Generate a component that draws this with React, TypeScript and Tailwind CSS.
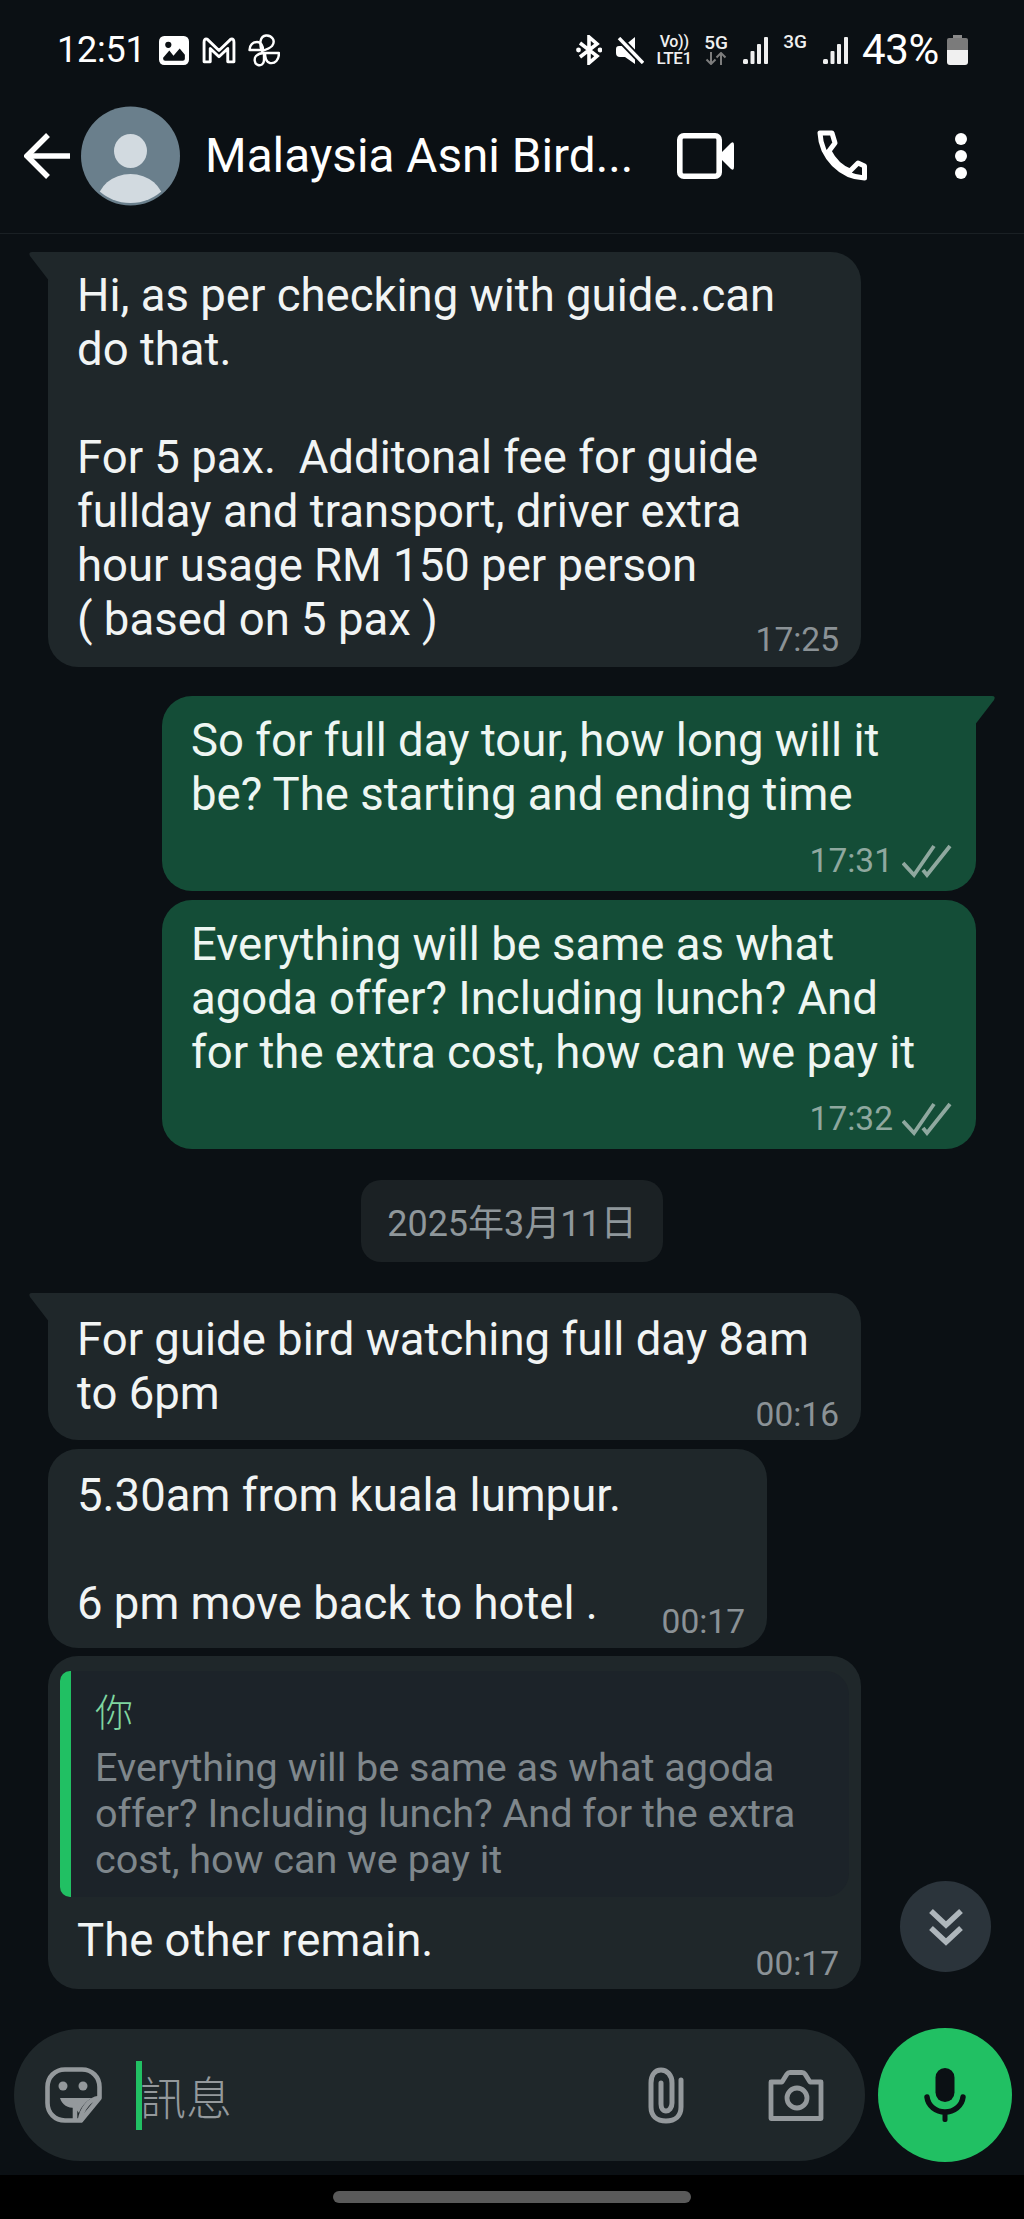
import React from "react";

const Roboto = "font-['Roboto','Noto_Sans_CJK_TC',sans-serif]";

function Ticks() {
  return (
    <svg width="50" height="34" viewBox="0 0 50 34" fill="none" stroke="#8fa89f" strokeWidth="3.8" className="ml-[9px]">
      <path d="M1 19 L12 31 L32 2" />
      <path d="M21 26 L25 31 L48 2" />
    </svg>
  );
}

function Tail({ side, color }: { side: "l" | "r"; color: string }) {
  return side === "l" ? (
    <svg width="22" height="30" viewBox="0 0 22 30" className="absolute -left-[20px] top-0" fill={color}>
      <path d="M22 0 H4 Q0 0 2 4 L22 30 Z" />
    </svg>
  ) : (
    <svg width="22" height="30" viewBox="0 0 22 30" className="absolute -right-[20px] top-0" fill={color}>
      <path d="M0 0 H18 Q22 0 20 4 L0 30 Z" />
    </svg>
  );
}

function Time({ t, ticks }: { t: string; ticks?: boolean }) {
  return (
    <div className={`flex items-center self-end text-[33.5px] leading-[40px] ${ticks ? "text-[#8fa89f]" : "text-[#8b9296]"}`}>
      {t}
      {ticks && <Ticks />}
    </div>
  );
}

function In({ lines, t, w, tail, timeMt, pt = "pt-[17px]", pb = "pb-[7px]", mt }: { lines: string[]; t: string; w: string; tail?: boolean; timeMt: string; pt?: string; pb?: string; mt: string }) {
  return (
    <div className={`relative shrink-0 flex flex-col ${w} ${mt} ${pt} ${pb} pl-[29px] pr-[22px] bg-[#1f272a] rounded-[30px] ${tail ? "rounded-tl-none" : ""}`}>
      {tail && <Tail side="l" color="#1f272a" />}
      {lines.map((l, i) => (
        <div key={i} className="h-[54px] text-[45.5px] leading-[54px] whitespace-nowrap text-[#f1f4f4]">{l}</div>
      ))}
      <div className={`self-end ${timeMt}`}><Time t={t} /></div>
    </div>
  );
}

function Out({ lines, t, tail, mt }: { lines: string[]; t: string; tail?: boolean; mt: string }) {
  return (
    <div className={`relative shrink-0 flex flex-col self-end mr-[48px] w-[814px] ${mt} pt-[18px] pb-[10px] pl-[29px] pr-[24px] bg-[#144d37] rounded-[30px] ${tail ? "rounded-tr-none" : ""}`}>
      {tail && <Tail side="r" color="#144d37" />}
      {lines.map((l, i) => (
        <div key={i} className="h-[54px] text-[45.5px] leading-[54px] whitespace-nowrap text-[#eef6f2]">{l}</div>
      ))}
      <div className="self-end mt-[19px]"><Time t={t} ticks /></div>
    </div>
  );
}

function Signal() {
  return (
    <svg width="25" height="27" viewBox="0 0 25 27" fill="#efefef">
      <rect x="0" y="22" width="5" height="5" rx="1.5" />
      <rect x="7.5" y="14" width="4" height="13" rx="1" />
      <rect x="14" y="7" width="4" height="20" rx="1" />
      <rect x="21" y="0" width="4" height="27" rx="1" />
    </svg>
  );
}

function StatusBar() {
  return (
    <div className="flex h-[100px] shrink-0 items-center pl-[57px] pr-[56px] text-white">
      <span className="text-[36px] leading-[40px] w-[102px] -tracking-[0.2px]">12:51</span>
      <svg width="30" height="29" viewBox="0 0 29 28">
        <rect x="0" y="0" width="29" height="28" rx="5" fill="#fff" />
        <circle cx="9" cy="8.5" r="3" fill="#0b1014" />
        <path d="M4 21 L10 14 L14 19 L20 12 L25 18 V22 Q25 24 23 24 H6 Q4 24 4 22 Z" fill="#0b1014" />
      </svg>
      <svg width="34" height="27" viewBox="0 0 33 26" fill="none" stroke="#fff" strokeWidth="2.8" className="ml-[13px]" strokeLinejoin="round">
        <path d="M2 24 V5 Q2 1 5 2 L16.5 13 L28 2 Q31 1 31 5 V24 H25 V11 L16.5 19 L8 11 V24 Z" />
      </svg>
      <svg width="32" height="33" viewBox="0 0 32 33" fill="none" stroke="#fff" strokeWidth="2.4" className="ml-[12px]" strokeLinejoin="round">
        <path d="M14 17 C11 10 12 2 18 1.5 C24 1 28 7 24 12 C21 15 17 16 14 17 Z" />
        <path d="M17 19 H31 C31 26 27 30 22 29 C18 28 17 23 17 19 Z" />
        <path d="M15 16 H1.5 C1.5 11 5 8 9 8 C13 8 15 12 15 16 Z" />
        <path d="M16 19 V26 C16 30 13 32 10 31 C6 30 6 24 8 22 C10 20 13 19 16 19 Z" />
      </svg>
      <div className="flex-1" />
      <svg width="26" height="30" viewBox="0 0 26 30" fill="none" stroke="#fff" strokeWidth="3.6">
        <path d="M4 8 L21 21 L13 28 V2 L21 9 L4 22" />
        <circle cx="2.5" cy="15" r="2.4" fill="#fff" stroke="none" />
        <circle cx="24" cy="15" r="2.4" fill="#fff" stroke="none" />
      </svg>
      <svg width="29" height="27" viewBox="0 0 29 27" className="ml-[13px]">
        <path d="M1 12 Q1 9 4 9 H9 L20 0 V27 L10 20 H5 Q1 20 1 16 Z" fill="#fff" />
        <path d="M3 0 L29 27" stroke="#0b1014" strokeWidth="7" />
        <path d="M4 1 L28 26" stroke="#fff" strokeWidth="3.4" />
      </svg>
      <div className="ml-[12px] w-[36px] flex flex-col items-center text-[#efefef] font-medium leading-[16px] text-[17px] tracking-[-0.3px]">
        <span className="text-[16px]">Vo))</span>
        <span>LTE1</span>
      </div>
      <div className="ml-[12px] w-[24px] flex flex-col items-center text-[#efefef]">
        <span className="text-[19px] leading-[16px] font-medium">5G</span>
        <svg width="22" height="13" viewBox="0 0 22 13" fill="none" stroke="#7d7d7d" strokeWidth="2" className="mt-[1px]">
          <path d="M6 0 V12 M1.5 7.5 L6 12 L10.5 7.5" />
          <path d="M16 13 V1 M11.5 5.5 L16 1 L20.5 5.5" />
        </svg>
      </div>
      <div className="ml-[15px]"><Signal /></div>
      <span className="ml-[15px] self-start mt-[34px] text-[19px] leading-[16px] font-medium text-[#efefef]">3G</span>
      <div className="ml-[16px]"><Signal /></div>
      <span className="ml-[14px] text-[42px] leading-[40px] -tracking-[0.3px]">43%</span>
      <svg width="21" height="30" viewBox="0 0 21 30" className="ml-[8px]">
        <rect x="6" y="0" width="9" height="3" fill="#8a8a8a" />
        <path d="M2 3 H19 Q21 3 21 5 V15 H0 V5 Q0 3 2 3 Z" fill="#7b7b7b" />
        <path d="M0 15 H21 V27 Q21 30 18 30 H3 Q0 30 0 27 Z" fill="#f0f0f0" />
      </svg>
    </div>
  );
}

function Header() {
  return (
    <div className="flex h-[134px] shrink-0 items-center border-b border-b-[#1a2024] pb-[22px] text-white">
      <svg width="46" height="46" viewBox="0 0 46 46" fill="none" stroke="#fff" strokeWidth="5.5" className="ml-[24px]">
        <path d="M46 23 H4" />
        <path d="M24 2 L3 23 L24 44" />
      </svg>
      <svg width="99" height="100" viewBox="0 0 99 100" className="ml-[11px]">
        <circle cx="49.5" cy="50" r="49.5" fill="#6a7f8c" />
        <clipPath id="av"><circle cx="49.5" cy="50" r="47" /></clipPath>
        <ellipse cx="49.5" cy="45" rx="16.5" ry="17" fill="#d2dae0" />
        <ellipse cx="49.5" cy="96" rx="33" ry="28" fill="#d2dae0" clipPath="url(#av)" />
      </svg>
      <span className="ml-[25px] w-[472px] text-[47.7px] leading-[54px] whitespace-nowrap">Malaysia Asni Bird...</span>
      <svg width="57" height="46" viewBox="0 0 57 46">
        <rect x="2.8" y="2.8" width="39.4" height="40.4" rx="4" fill="none" stroke="#fff" strokeWidth="5.6" />
        <path d="M44 20 L54 10 Q57 8 57 12 V34 Q57 38 54 36 L44 26 Z" fill="#fff" />
      </svg>
      <svg width="50" height="51" viewBox="0 0 50 51" fill="none" stroke="#fff" strokeWidth="5" className="ml-[83px]" strokeLinejoin="round">
        <path d="M3 3 H15 L18 13 L12 21 C17 31 23 37 33 41 L41 33 L47.5 36 V48 C24 47 4 27 3 3 Z" />
      </svg>
      <div className="ml-[88px] flex flex-col gap-[5px]">
        <div className="w-[12px] h-[12px] rounded-full bg-white" />
        <div className="w-[12px] h-[12px] rounded-full bg-white" />
        <div className="w-[12px] h-[12px] rounded-full bg-white" />
      </div>
    </div>
  );
}

function Composer() {
  return (
    <div className="flex items-center -ml-[34px] h-[134px] mt-[39px] shrink-0">
      <div className="flex items-center w-[851px] h-[132px] rounded-[66px] bg-[#1f272a]">
        <svg width="57" height="56" viewBox="0 0 57 56" fill="none" stroke="#94999c" strokeWidth="4.6" strokeLinejoin="round" className="ml-[31px]">
          <path d="M20 2.5 H37 C47 2.5 54.5 10 54.5 20 V31 L36 53.5 H20 C10 53.5 2.5 46 2.5 36 V20 C2.5 10 10 2.5 20 2.5 Z" />
          <path d="M54 31 C44 32 37 42 35 53" />
          <path d="M15 31 H47 C41 34 36 40 34 46 L30 41 C23 41 17 38 15 31 Z" fill="#94999c" stroke="none" />
          <path d="M30 40 V53" />
          <circle cx="18" cy="19" r="4.5" fill="#94999c" stroke="none" />
          <circle cx="38" cy="19" r="4.5" fill="#94999c" stroke="none" />
        </svg>
        <div className="ml-[34px] w-[6px] h-[69px] bg-[#21c063]" />
        <span className="-ml-[2px] text-[46px] leading-[60px] text-[#94999c] font-['Noto_Sans_CJK_TC',sans-serif] font-light">訊息</span>
        <div className="flex-1" />
        <svg width="36" height="57" viewBox="0 0 36 57" fill="none" stroke="#94999c" strokeWidth="5" strokeLinecap="round">
          <path d="M33 13 V40 C33 49 27 54 18 54 C9 54 3 49 3 40 V16 C3 8 7 3 13 3 C19 3 24 8 24 16 V36 C24 41 21 44 18 44 C15 44 13 41 13 37 V16" />
        </svg>
        <svg width="56" height="51" viewBox="0 0 56 51" className="ml-[84px] mr-[41px]" fill="none" stroke="#94999c" strokeWidth="4.8">
          <path d="M3 12 H14 L19 4 Q20 2.5 22 2.5 H34 Q36 2.5 37 4 L42 12 H53 V48.5 H3 Z" strokeLinejoin="round" />
          <circle cx="29" cy="28" r="10" />
        </svg>
      </div>
      <div className="ml-[13px] flex items-center justify-center w-[134px] h-[134px] rounded-full bg-[#21c063]">
        <svg width="42" height="54" viewBox="0 0 42 54" fill="#0b1014">
          <rect x="11.5" y="0" width="19" height="34" rx="9.5" />
          <path d="M3 29 C4 38 12 44 21 44 C30 44 38 38 39 29" fill="none" stroke="#0b1014" strokeWidth="5.5" strokeLinecap="round" />
          <rect x="18.5" y="42" width="5" height="12" rx="2" />
        </svg>
      </div>
    </div>
  );
}

export default function App() {
  return (
    <div className={`relative flex flex-col w-[1024px] h-[2219px] overflow-hidden bg-[#0b1014] ${Roboto}`}>
      <StatusBar />
      <Header />
      <div className="flex flex-col h-[1941px] shrink-0 pl-[48px]">
        <In
          mt="mt-[18px]"
          w="w-[813px]"
          tail
          t="17:25"
          timeMt="-mt-[27px]"
          lines={[
            "Hi, as per checking with guide..can",
            "do that.",
            "",
            "For 5 pax.\u00a0 Additonal fee for guide",
            "fullday and transport, driver extra",
            "hour usage RM 150 per person",
            "( based on 5 pax )",
          ]}
        />
        <Out mt="mt-[29px]" tail t="17:31" lines={["So for full day tour, how long will it", "be? The starting and ending time"]} />
        <Out mt="mt-[9px]" t="17:32" lines={["Everything will be same as what", "agoda offer? Including lunch? And", "for the extra cost, how can we pay it"]} />
        <div className="self-center -ml-[48px] mt-[31px] pt-[6px] h-[82px] w-[302px] shrink-0 flex items-center justify-center rounded-[20px] bg-[#1b2124] text-[36px] text-[#8f979b]">
          2025年3月11日
        </div>
        <In mt="mt-[31px]" w="w-[813px]" tail t="00:16" timeMt="-mt-[26px]" pt="pt-[20px]" pb="pb-[5px]" lines={["For guide bird watching full day 8am", "to 6pm"]} />
        <In mt="mt-[9px]" w="w-[719px]" t="00:17" timeMt="-mt-[29px]" pt="pt-[20px]" pb="pb-[6px]" lines={["5.30am from kuala lumpur.", "", "6 pm move back to hotel ."]} />
        <div className="relative shrink-0 flex flex-col mt-[8px] w-[813px] h-[333px] pl-[12px] pt-[15px] pr-[12px] bg-[#1f272a] rounded-[30px]">
          <div className="flex h-[226px] shrink-0">
            <div className="w-[11px] shrink-0 rounded-l-[10px] bg-[#21c063]" />
            <div className="flex-1 flex flex-col rounded-r-[24px] bg-[#1c2329] pl-[24px] pt-[17px]">
              <div className="h-[57px] shrink-0 text-[38px] leading-[44px] text-[#7fd6a0] font-['Noto_Sans_CJK_TC',sans-serif] font-light">你</div>
              <div className="text-[39.6px] leading-[46px] text-[#7f878c] whitespace-nowrap">
                <div>Everything will be same as what agoda</div>
                <div>offer? Including lunch? And for the extra</div>
                <div>cost, how can we pay it</div>
              </div>
            </div>
          </div>
          <div className="mt-[17px] ml-[17px] h-[54px] shrink-0 text-[45.5px] leading-[54px] text-[#f1f4f4]">The other remain.</div>
          <div className="self-end mr-[10px] -mt-[24px]"><Time t="00:17" /></div>
        </div>
        <Composer />
      </div>
      <div className="absolute left-[900px] top-[1881px] flex items-center justify-center w-[91px] h-[91px] rounded-full bg-[#2b343b]">
        <svg width="36" height="38" viewBox="0 0 36 38" fill="none" stroke="#aeb6bb" strokeWidth="5.5">
          <path d="M3 3 L18 17 L33 3" />
          <path d="M3 20 L18 34 L33 20" />
        </svg>
      </div>
      <div className="flex-1 bg-black flex justify-center pt-[16px]">
        <div className="w-[358px] h-[12px] rounded-full bg-[#5a5a5a]" />
      </div>
    </div>
  );
}
